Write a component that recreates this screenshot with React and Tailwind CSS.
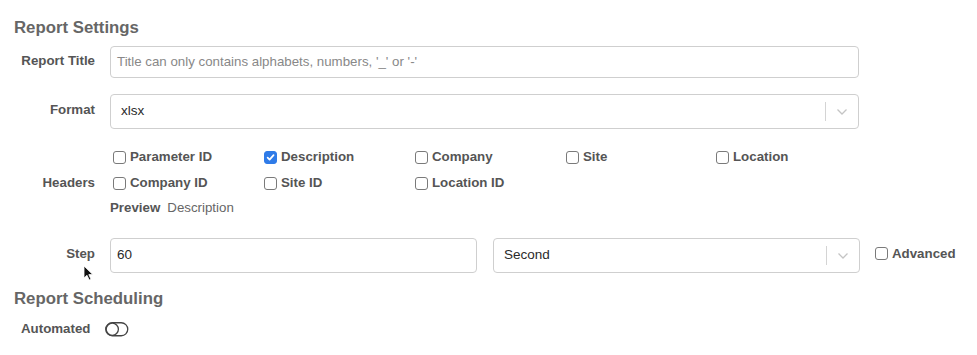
import React from 'react';

const Check = ({ checked, label }) => (
  <div className="flex items-center gap-[4px] leading-[16px]">
    <span
      className={`w-[13px] h-[13px] rounded-[3px] flex items-center justify-center ${
        checked ? 'bg-[#2f7be8] border border-[#2f7be8]' : 'border border-[#7a7a7a] bg-white'
      }`}
    >
      {checked && (
        <svg width="9" height="9" viewBox="0 0 10 10">
          <path d="M1.8 5.2 L4 7.4 L8.4 2.4" stroke="#fff" strokeWidth="1.9" fill="none" strokeLinecap="round" strokeLinejoin="round" />
        </svg>
      )}
    </span>
    <span className="text-[13.3px] font-bold text-[#555]">{label}</span>
  </div>
);

const Chevron = () => (
  <div className="flex items-center h-full">
    <span className="w-px h-[19px] bg-[#d4d4d4]" />
    <svg className="mx-[10px]" width="12" height="8" viewBox="0 0 12 8">
      <path d="M1.5 1.5 L6 6 L10.5 1.5" stroke="#c4c4c4" strokeWidth="1.3" fill="none" />
    </svg>
  </div>
);

const Select = ({ value, className }) => (
  <div className={`h-[35px] border border-[#cfcfcf] rounded-[4px] bg-white flex items-center justify-between pl-[10px] ${className}`}>
    <span className="text-[13.5px] text-[#2a2a2a]">{value}</span>
    <Chevron />
  </div>
);

const Label = ({ children }) => (
  <div className="w-[81px] mr-[15px] text-right text-[13.3px] font-bold text-[#555] shrink-0">{children}</div>
);

const headers = [
  ['Parameter ID', false],
  ['Description', true],
  ['Company', false],
  ['Site', false],
  ['Location', false],
  ['Company ID', false],
  ['Site ID', false],
  ['Location ID', false],
];

export default function App() {
  return (
    <div className="relative w-[977px] h-[355px] bg-white px-[14px] pt-[16px]" style={{ fontFamily: '"Liberation Sans", Arial, sans-serif' }}>
      <h2 className="text-[16.8px] font-bold text-[#666] leading-[24px]">Report Settings</h2>

      <div className="flex items-center mt-[6px]">
        <Label><span className="relative top-[-1px]">Report Title</span></Label>
        <div className="w-[749px] h-[32px] border border-[#cfcfcf] rounded-[4px] flex items-center px-[6px]">
          <span className="text-[13.3px] text-[#888]">Title can only contains alphabets, numbers, '_' or '-'</span>
        </div>
      </div>

      <div className="flex items-center mt-[16px]">
        <Label><span className="relative top-[-2px]">Format</span></Label>
        <Select value="xlsx" className="w-[749px]" />
      </div>

      <div className="flex items-center mt-[20px]">
        <Label>Headers</Label>
        <div className="flex flex-col">
          <div className="grid grid-cols-[151px_151px_151px_150px_120px] gap-y-[10px] pl-[3px]">
            {headers.map(([label, checked]) => (
              <Check key={label} label={label} checked={checked} />
            ))}
          </div>
          <div className="mt-[9px] text-[13.3px] leading-[16px]">
            <span className="font-bold text-[#555]">Preview</span>
            <span className="ml-[7px] text-[#666]">Description</span>
          </div>
        </div>
      </div>

      <div className="flex items-center mt-[22px]">
        <Label><span className="relative top-[-2px]">Step</span></Label>
        <div className="w-[367px] h-[35px] border border-[#cfcfcf] rounded-[4px] flex items-center px-[6px]">
          <span className="text-[13.5px] text-[#2a2a2a]">60</span>
        </div>
        <Select value="Second" className="w-[367px] ml-[16px]" />
        <div className="ml-[15px] relative top-[-2px]">
          <Check label="Advanced" checked={false} />
        </div>
      </div>

      <h2 className="text-[16.8px] font-bold text-[#666] leading-[24px] mt-[14px]">Report Scheduling</h2>

      <div className="flex items-center mt-[9px] pl-[7px]">
        <span className="text-[13.3px] font-bold text-[#555] relative top-[-1px]">Automated</span>
        <svg className="ml-[15px]" width="24" height="15" viewBox="0 0 24 15">
          <rect x="0.75" y="0.75" width="22" height="13" rx="6.5" fill="none" stroke="#444" strokeWidth="1.3" />
          <circle cx="7.3" cy="7.25" r="6.1" fill="#fff" stroke="#444" strokeWidth="1.3" />
        </svg>
      </div>

      <svg className="absolute left-[83px] top-[265px]" width="11" height="16" viewBox="0 0 11 16">
        <path d="M1 1 L1 13 L4 10.3 L6.2 15 L8 14.2 L5.8 9.6 L9.8 9.6 Z" fill="#111" stroke="#fff" strokeWidth="0.8" />
      </svg>
    </div>
  );
}
